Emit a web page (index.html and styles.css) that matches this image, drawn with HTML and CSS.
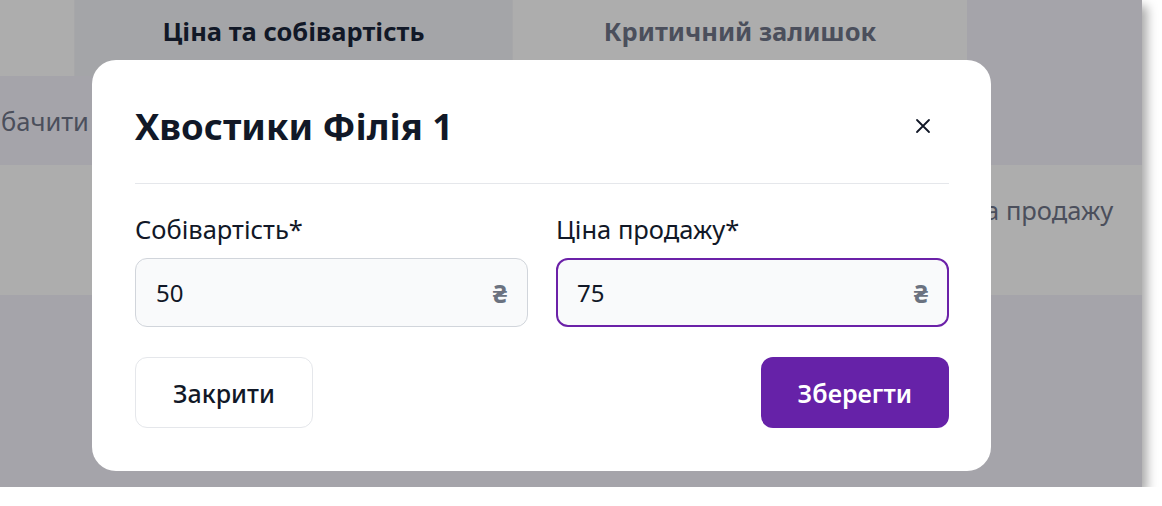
FILE: index.html
```html
<!DOCTYPE html>
<html lang="uk">
  <head>
    <meta charset="UTF-8" />
    <meta name="viewport" content="width=device-width, initial-scale=1.0" />
    <title>Ціна та собівартість</title>
    <link rel="stylesheet" href="styles.css">
  </head>
  <body>
    <div class="window">
      <div class="tabs">
        <div class="tab tab-first"></div>
        <div class="tab tab-active">Ціна та собівартість</div>
        <div class="tab tab-muted">Критичний залишок</div>
      </div>
      <div class="row row-hint"><span>бачити</span></div>
      <div class="row row-cols"><span class="col-title">Ціна продажу</span></div>

      <div class="modal">
        <div class="modal-head">
          <h2>Хвостики Філія 1</h2>
          <button class="close" title="close">
            <svg width="16" height="16" viewBox="0 0 16 16">
              <path d="M2 2 L14 14 M14 2 L2 14" stroke="#111827" stroke-width="1.8" stroke-linecap="round" />
            </svg>
          </button>
        </div>
        <div class="fields">
          <div class="field">
            <label for="cost">Собівартість*</label>
            <div class="input-wrap">
              <input type="text" id="cost" value="50" />
              <span class="currency">₴</span>
            </div>
          </div>
          <div class="field">
            <label for="price">Ціна продажу*</label>
            <div class="input-wrap focused">
              <input type="text" id="price" value="75" />
              <span class="currency">₴</span>
            </div>
          </div>
        </div>
        <div class="actions">
          <button class="btn btn-light">Закрити</button>
          <button class="btn btn-primary">Зберегти</button>
        </div>
      </div>
    </div>
  </body>
</html>
```

FILE: styles.css
```css
body {
  margin: 0;
  background: #fff;
  font-family: "Noto Sans", "Open Sans", sans-serif;
}
.window {
  position: relative;
  width: 1142px;
  height: 487px;
  overflow: hidden;
  background: #a5a4aa;
  box-shadow: 5px 6px 10px rgba(0, 0, 0, 0.35);
}
.tabs {
  display: flex;
  height: 76px;
}
.tab {
  display: flex;
  align-items: center;
  justify-content: center;
  background: #adadad;
  font-size: 25.5px;
  font-weight: 700;
  padding-bottom: 14px;
  box-sizing: border-box;
}
.tab-first {
  width: 75px;
  border-right: 1px solid #a7a7a9;
}
.tab-active {
  width: 438px;
  background: #a4a5a8;
  color: #111827;
  border-right: 1px solid #a7a7a9;
}
.tab-muted {
  width: 454px;
  color: #4b4f5c;
}
.row {
  display: flex;
  font-size: 25.5px;
  color: #4b4f5c;
}
.row-hint {
  height: 89px;
  align-items: center;
  padding-left: 1px;
}
.row-cols {
  height: 130px;
  background: #adadad;
  padding: 28px 0 0 944px;
  box-sizing: border-box;
}
.modal {
  position: absolute;
  left: 92px;
  top: 60px;
  width: 899px;
  box-sizing: border-box;
  padding: 44px 42px 43px 43px;
  background: #fff;
  border-radius: 24px;
}
.modal-head {
  display: flex;
  justify-content: space-between;
  align-items: center;
  padding-bottom: 35px;
  border-bottom: 1px solid #e5e7eb;
}
.modal-head h2 {
  margin: 0;
  font-size: 36.5px;
  line-height: 44px;
  font-weight: 700;
  color: #111827;
}
.close {
  width: 52px;
  height: 44px;
  border: none;
  background: none;
  padding: 0;
  display: flex;
  align-items: center;
  justify-content: center;
}
.fields {
  display: grid;
  grid-template-columns: minmax(0, 1fr) minmax(0, 1fr);
  gap: 28px;
  margin-top: 29px;
}
.field label {
  display: block;
  font-size: 25.5px;
  line-height: 32px;
  color: #111827;
  margin-bottom: 13px;
}
.input-wrap {
  display: flex;
  align-items: center;
  height: 69px;
  box-sizing: border-box;
  padding: 0 20px;
  border: 1px solid #d1d5db;
  border-radius: 12px;
  background: #f9fafb;
}
.input-wrap.focused {
  border: 2px solid #6b21a8;
  padding: 0 19px;
}
.input-wrap input {
  flex: 1;
  width: 0;
  min-width: 0;
  border: none;
  outline: none;
  background: transparent;
  padding: 0;
  font-family: inherit;
  font-size: 24px;
  color: #111827;
}
.currency {
  font-size: 25px;
  font-weight: 700;
  color: #6b7280;
}
.actions {
  display: flex;
  justify-content: space-between;
  margin-top: 30px;
}
.btn {
  height: 71px;
  padding: 0 37px;
  border-radius: 12px;
  font-family: inherit;
  font-size: 25px;
  cursor: pointer;
}
.btn-light {
  background: #fff;
  border: 1px solid #e5e7eb;
  color: #111827;
  font-weight: 500;
}
.btn-primary {
  background: #6622a8;
  border: none;
  color: #fff;
  font-weight: 600;
}
```
